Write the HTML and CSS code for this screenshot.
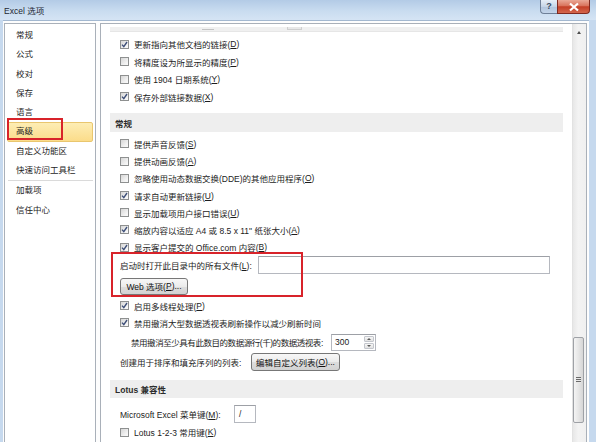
FILE: index.html
```html
<!DOCTYPE html>
<html lang="zh-CN">
<head>
  <meta charset="UTF-8" />
  <title>Excel 选项</title>
  <link rel="stylesheet" href="styles.css">
</head>
<body>
  <div class="window">
    <div class="titlebar">
      <span class="title">Excel 选项</span>
      <div class="caption-btns">
        <span class="btn-help">?</span>
        <span class="btn-close">
          <svg viewBox="0 0 12 10" width="12" height="10"><path d="M2 1.5l8 7M10 1.5l-8 7" /></svg>
        </span>
      </div>
    </div>

    <div class="client">
      <ul class="nav">
        <li>常规</li>
        <li>公式</li>
        <li>校对</li>
        <li>保存</li>
        <li>语言</li>
        <li class="active">高级</li>
        <li>自定义功能区</li>
        <li>快速访问工具栏</li>
        <li class="sep"></li>
        <li>加载项</li>
        <li>信任中心</li>
      </ul>

      <div class="main">
        <div class="content">
          <div class="cut-band"><span class="cut-a"></span><span class="cut-b"></span></div>

          <div class="row tall"><span class="cb on"><svg viewBox="0 0 7 7"><path d="M1 3.6l1.8 2L6 1" /></svg></span>更新指向其他文档的链接(<u>D</u>)</div>
          <div class="row tall"><span class="cb"></span>将精度设为所显示的精度(<u>P</u>)</div>
          <div class="row tall"><span class="cb"></span>使用 1904 日期系统(<u>Y</u>)</div>
          <div class="row tall"><span class="cb on"><svg viewBox="0 0 7 7"><path d="M1 3.6l1.8 2L6 1" /></svg></span>保存外部链接数据(<u>X</u>)</div>

          <div class="section section-general">常规</div>

          <div class="row first"><span class="cb"></span>提供声音反馈(<u>S</u>)</div>
          <div class="row"><span class="cb"></span>提供动画反馈(<u>A</u>)</div>
          <div class="row"><span class="cb"></span>忽略使用动态数据交换(DDE)的其他应用程序(<u>O</u>)</div>
          <div class="row"><span class="cb on"><svg viewBox="0 0 7 7"><path d="M1 3.6l1.8 2L6 1" /></svg></span>请求自动更新链接(<u>U</u>)</div>
          <div class="row"><span class="cb"></span>显示加载项用户接口错误(<u>U</u>)</div>
          <div class="row"><span class="cb on"><svg viewBox="0 0 7 7"><path d="M1 3.6l1.8 2L6 1" /></svg></span>缩放内容以适应 A4 或 8.5 x 11" 纸张大小(<u>A</u>)</div>
          <div class="row"><span class="cb on"><svg viewBox="0 0 7 7"><path d="M1 3.6l1.8 2L6 1" /></svg></span>显示客户提交的 Office.com 内容(<u>B</u>)</div>

          <div class="row field-row">
            <span class="label label-path">启动时打开此目录中的所有文件(<u>L</u>):</span>
            <span class="field field-path"></span>
          </div>
          <div class="row btn-row">
            <span class="btn btn-web">Web 选项(<u>P</u>)...</span>
          </div>

          <div class="row after-btn"><span class="cb on"><svg viewBox="0 0 7 7"><path d="M1 3.6l1.8 2L6 1" /></svg></span>启用多线程处理(<u>P</u>)</div>
          <div class="row"><span class="cb on"><svg viewBox="0 0 7 7"><path d="M1 3.6l1.8 2L6 1" /></svg></span>禁用撤消大型数据透视表刷新操作以减少刷新时间</div>

          <div class="row spin-row">
            <span class="label label-rows">禁用撤消至少具有此数目的数据源行(千)的数据透视表:</span>
            <span class="field spin">
              <span class="spin-val">300</span>
              <span class="spin-btns">
                <span class="spin-up"></span>
                <span class="spin-down"></span>
              </span>
            </span>
          </div>

          <div class="row list-row">
            <span class="label label-list">创建用于排序和填充序列的列表:</span>
            <span class="btn btn-list">编辑自定义列表(<u>O</u>)...</span>
          </div>

          <div class="section section-lotus">Lotus 兼容性</div>

          <div class="row menu-row">
            <span class="label label-menu">Microsoft Excel 菜单键(<u>M</u>):</span>
            <span class="field field-menu">/</span>
          </div>
          <div class="row"><span class="cb"></span>Lotus 1-2-3 常用键(<u>K</u>)</div>
        </div>

        <div class="scrollbar">
          <span class="sb-up"></span>
          <span class="sb-thumb"><span class="grip"></span></span>
        </div>
      </div>
    </div>

    <!-- red annotation boxes drawn over the dialog -->
    <div class="mark mark-nav"></div>
    <div class="mark mark-web"></div>
  </div>
</body>
</html>
```

FILE: styles.css
```css
* {
  box-sizing: border-box;
}
html, body {
  margin: 0;
  padding: 0;
}
body {
  width: 596px;
  height: 442px;
  overflow: hidden;
  background: #c6d9ee;
  font-family: "Liberation Sans", "Noto Sans CJK SC", sans-serif;
  font-size: 8.5px;
  color: #1c1c1c;
}
u {
  text-decoration: underline;
  text-underline-offset: 1px;
}
.window {
  position: relative;
  height: 442px;
  display: flex;
  flex-direction: column;
}

/* title bar */
.titlebar {
  height: 20px;
  flex: none;
  display: flex;
  align-items: flex-start;
  background: linear-gradient(#b3cbe6, #c9dcf0 55%, #d5e4f4);
}
.title {
  padding: 6px 0 0 4px;
  line-height: 10px;
  color: #1d2633;
}
.caption-btns {
  margin-left: auto;
  margin-right: 6px;
  display: flex;
}
.btn-help {
  width: 17px;
  height: 14px;
  border: 1px solid #6f8098;
  border-top: none;
  border-right: none;
  border-radius: 0 0 0 4px;
  background: linear-gradient(#e6eef7, #c6d5e7 50%, #b0c4dc 51%, #c4d5ea);
  color: #3a4a62;
  font-size: 9px;
  font-weight: bold;
  text-align: center;
  line-height: 13px;
}
.btn-close {
  width: 33px;
  height: 14px;
  border: 1px solid #80291f;
  border-top: none;
  border-radius: 0 0 4px 0;
  background: linear-gradient(#eaa896, #d9735c 45%, #c43f26 52%, #d4664d);
  display: flex;
  align-items: center;
  justify-content: center;
}
.btn-close svg path {
  stroke: #fff;
  stroke-width: 2.2;
  fill: none;
}

/* client area */
.client {
  flex: 1;
  display: flex;
  gap: 4px;
  margin: 0 7px 0 3px;
  padding: 2px 2px 0 1px;
  background: #fdfdfd;
  border-top: 1px solid #a3b8d0;
  min-height: 0;
}
.nav {
  width: 92px;
  flex: none;
  list-style: none;
  margin: 0;
  padding: 2px 2px 0;
  background: #fff;
  border: 1px solid #a9b0b9;
  border-bottom: none;
}
.nav li {
  height: 19.3px;
  line-height: 19.3px;
  padding-left: 9px;
  color: #1e1e1e;
  white-space: nowrap;
}
.nav li.active {
  background: linear-gradient(#fdedb4, #fbdc8a);
  border: 1px solid #e9c66e;
  border-radius: 2px;
  line-height: 17.3px;
  padding-left: 8px;
}
.nav li.sep {
  height: 1px;
  margin: 0 0 0 1px;
  background: #dadada;
}

.main {
  flex: 1;
  display: flex;
  background: #fff;
  border: 1px solid #a9b0b9;
  border-bottom: none;
  min-width: 0;
}
.content {
  flex: 1;
  padding: 0 9px;
  overflow: hidden;
}
.cut-band {
  margin-top: 3px;
  height: 5px;
  background: #f0f0f0;
  border-bottom: 1px solid #e6e6e6;
  position: relative;
}
.cut-a, .cut-b {
  position: absolute;
  top: 0;
  height: 3px;
  border-bottom: 1px solid #c4c4c4;
}
.cut-a {
  left: 92px;
  width: 12px;
}
.cut-b {
  left: 177px;
  width: 15px;
  border: 1px solid #cfcfcf;
  border-top: none;
  background: #e8e8e8;
}

/* option rows */
.row {
  display: flex;
  align-items: center;
  height: 17.2px;
  padding-left: 10px;
  white-space: nowrap;
}
.row.tall {
  height: 17.5px;
}
.cut-band + .row {
  margin-top: 3.5px;
}
.row.first {
  margin-top: 3.4px;
}
.cb {
  width: 9px;
  height: 9px;
  flex: none;
  margin-right: 5px;
  border: 1px solid #8e9090;
  background: linear-gradient(135deg, #d6d6d6, #f3f3f3 70%, #fafafa);
  display: flex;
  align-items: center;
  justify-content: center;
}
.cb svg {
  width: 7px;
  height: 7px;
}
.cb svg path {
  fill: none;
  stroke: #3e4f78;
  stroke-width: 1.4;
}

.section {
  height: 19px;
  display: flex;
  align-items: center;
  padding-left: 5px;
  background: #eeeeee;
  font-weight: bold;
  color: #2c2c2c;
}
.section-general {
  margin-top: 7.5px;
}
.section-lotus {
  margin-top: 9px;
  height: 18px;
}

.label {
  flex: none;
}
.label-path {
  width: 138px;
}
.label-rows {
  width: 211px;
  padding-left: 11px;
  letter-spacing: -0.45px;
  overflow: hidden;
}
.label-list {
  width: 131px;
}
.label-menu {
  width: 114px;
}

.field {
  background: #fff;
  border: 1px solid #b5b8bf;
  border-top-color: #9da0a6;
}
.field-row {
  height: 19px;
}
.field-path {
  width: 292px;
  height: 18px;
}
.btn-row {
  height: 17px;
  margin-top: 3px;
}
.btn {
  height: 17px;
  display: flex;
  align-items: center;
  justify-content: center;
  border: 1px solid #777;
  border-radius: 3px;
  background: linear-gradient(#f7f7f7, #ebebeb 50%, #dddddd 52%, #d2d2d2);
  color: #111;
}
.btn-web {
  width: 68px;
}
.row.after-btn {
  margin-top: 2.5px;
}
.spin-row {
  height: 19px;
  margin-top: 1px;
}
.spin {
  width: 45px;
  height: 17px;
  display: flex;
}
.spin-val {
  flex: 1;
  padding-left: 3px;
  line-height: 15px;
}
.spin-btns {
  width: 11px;
  display: flex;
  flex-direction: column;
  gap: 1px;
  padding: 1px 1px 1px 0;
}
.spin-up, .spin-down {
  flex: 1;
  border: 1px solid #c3c6cc;
  border-radius: 1px;
  background: linear-gradient(#f6f6f6, #e2e2e2);
  position: relative;
}
.spin-up::after, .spin-down::after {
  content: "";
  position: absolute;
  left: 2px;
  top: 1px;
  border-left: 2px solid transparent;
  border-right: 2px solid transparent;
}
.spin-up::after {
  border-bottom: 2px solid #5a5a5a;
}
.spin-down::after {
  border-top: 2px solid #5a5a5a;
}
.list-row {
  height: 18px;
  margin-top: 1px;
}
.btn-list {
  width: 89px;
  height: 18px;
}
.menu-row {
  height: 18px;
  margin-top: 7px;
}
.field-menu {
  width: 22px;
  height: 18px;
  padding-left: 4px;
  line-height: 16px;
}
.menu-row + .row {
  margin-top: 1px;
}

/* scrollbar */
.scrollbar {
  width: 14px;
  flex: none;
  display: flex;
  flex-direction: column;
  background: linear-gradient(90deg, #e7e7e7, #f3f3f3 40%, #f0f0f0);
  border-left: 1px solid #e2e2e2;
}
.sb-up {
  height: 16px;
  position: relative;
}
.sb-up::after {
  content: "";
  position: absolute;
  left: 4px;
  top: 7px;
  border-left: 2.5px solid transparent;
  border-right: 2.5px solid transparent;
  border-bottom: 3px solid #4d4d4d;
}
.sb-thumb {
  margin: 297px 2px 0 0;
  height: 86px;
  border: 1px solid #9ea1a6;
  border-radius: 2px;
  background: linear-gradient(90deg, #f4f4f4, #e6e6e6 50%, #d6d6d6);
  display: flex;
  align-items: center;
  justify-content: center;
}
.grip {
  width: 5px;
  height: 6px;
  background: repeating-linear-gradient(#6a6a6a 0 1px, #e9e9e9 1px 2px);
}

/* red annotation boxes */
.mark {
  position: absolute;
  border: 2px solid #d8232a;
}
.mark-nav {
  left: 7px;
  top: 118px;
  width: 56px;
  height: 22px;
}
.mark-web {
  left: 111px;
  top: 252px;
  width: 192px;
  height: 45px;
}
```
